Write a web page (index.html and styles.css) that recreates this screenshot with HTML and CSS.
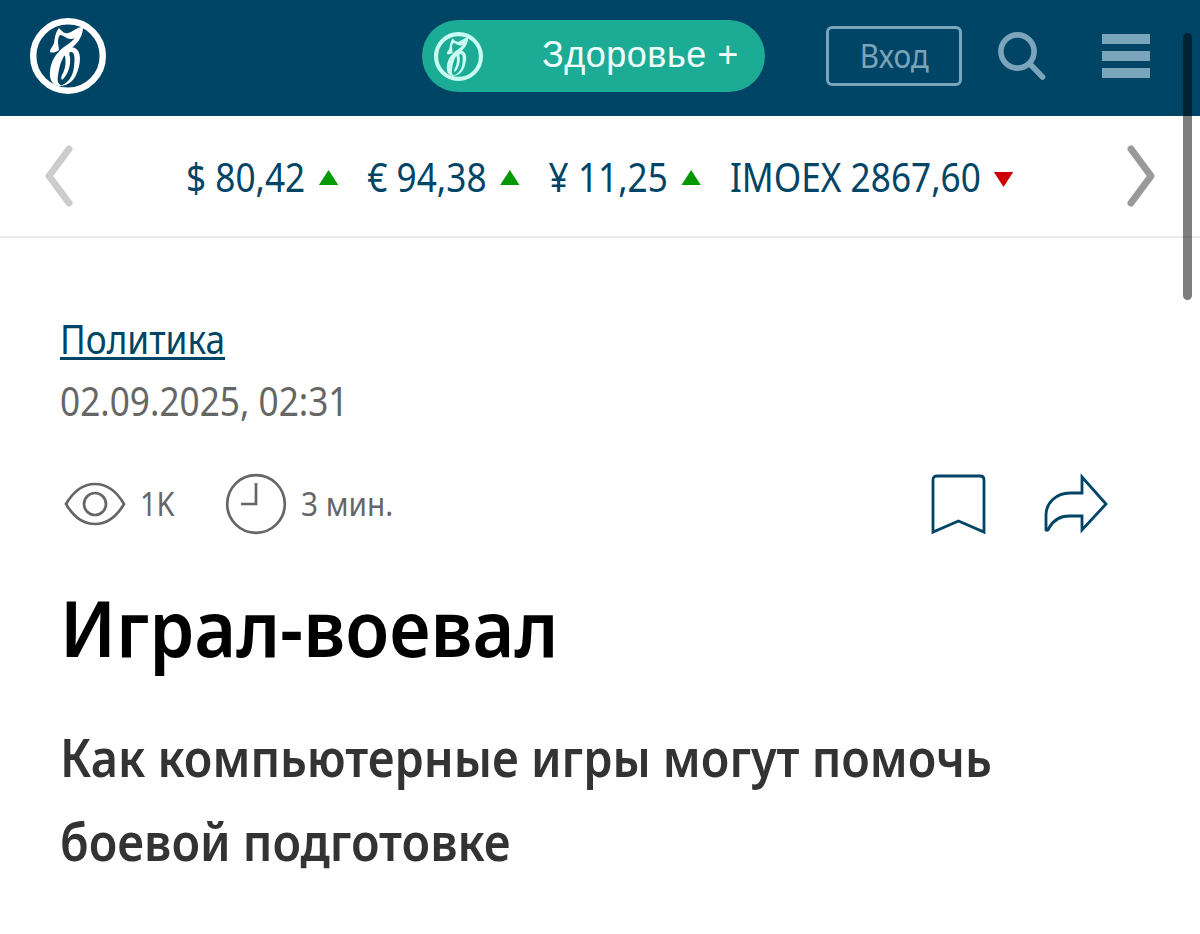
FILE: index.html
```html
<!DOCTYPE html>
<html lang="ru">
  <head>
    <meta charset="UTF-8" />
    <meta name="viewport" content="width=device-width, initial-scale=1.0" />
    <title>Играл-воевал</title>
    <link rel="stylesheet" href="styles.css">
  </head>
  <body>
    <svg class="defs" width="0" height="0">
      <symbol id="logo" viewBox="0 0 76 76">
        <circle cx="38" cy="38" r="34.8" fill="none" stroke="currentColor" stroke-width="6.4" />
        <!-- flag -->
        <path d="M29 10 C32 13 34 16 38 15 C43 14 46 9 53 9 C50 16 47 21 41 21 C36 21 34 17 30 17 C28 19 28 22 28 25 L29 32 C25 35 22 35 20 34 C20 30 23 29 24 25 C25 20 25 15 29 10 Z" fill="currentColor" />
        <!-- stem and left curve -->
        <path d="M53 9 C53 20 46 27 38 33 C31 40 29 50 28 58 C27 63 28 66 32 68 C23 69 19 62 20 53 C21 43 26 35 34 29 C42 24 47 19 49 11 Z" fill="currentColor" />
        <!-- right bowl -->
        <path d="M32 36 C35 30 41 28 45 30 C51 33 51 43 48 52 C45 62 39 68 29 68 C38 66 43 58 44 49 C45 41 45 34 41 34 C39 34 39 36 40 39 C41 47 38 57 32 62 C31 61 31 59 32 57 C36 50 36 43 35 38 C34 37 33 38 31 40 Z" fill="currentColor" />
      </symbol>
    </svg>
    <header class="header">
      <a class="logo"><svg width="76" height="76"><use href="#logo" /></svg></a>
      <a class="health">
        <svg width="49" height="49"><use href="#logo" /></svg>
        <span class="health-text">Здоровье +</span>
      </a>
      <a class="login"><span>Вход</span></a>
      <svg class="search" width="50" height="50" viewBox="0 0 50 50">
        <circle cx="20.5" cy="20.5" r="16.6" />
        <path d="M33 33 L45.5 46" />
      </svg>
      <div class="menu"><i></i><i></i><i></i></div>
    </header>

    <nav class="ticker">
      <svg class="arrow arrow-left" width="30" height="62" viewBox="0 0 30 62">
        <path d="M25 4 L5 31 L25 58" />
      </svg>
      <div class="rates">
        <div class="rate"><span>$ 80,42</span><b class="up"></b></div>
        <div class="rate"><span>€ 94,38</span><b class="up"></b></div>
        <div class="rate"><span>¥ 11,25</span><b class="up"></b></div>
        <div class="rate"><span>IMOEX 2867,60</span><b class="down"></b></div>
      </div>
      <svg class="arrow arrow-right" width="30" height="62" viewBox="0 0 30 62">
        <path d="M5 4 L25 31 L5 58" />
      </svg>
    </nav>

    <main class="article">
      <div><a class="rubric">Политика</a></div>
      <div><span class="date">02.09.2025, 02:31</span></div>
      <div class="meta">
        <svg class="eye" width="62" height="46" viewBox="0 0 62 46">
          <path d="M2 23 C9 11 19 3 31 3 C43 3 53 11 60 23 C53 35 43 43 31 43 C19 43 9 35 2 23 Z" />
          <circle cx="31" cy="23" r="11" />
        </svg>
        <span class="views">1K</span>
        <svg class="clock" width="62" height="62" viewBox="0 0 62 62">
          <circle cx="31" cy="31" r="28.8" />
          <path d="M31 10 V31 H16" />
        </svg>
        <span class="time">3 мин.</span>
        <svg class="bookmark" width="56" height="62" viewBox="0 0 56 62">
          <path d="M2 59 V7 Q2 3 6 3 H49 Q53 3 53 7 V59 L27.5 48 Z" />
        </svg>
        <svg class="share" width="66" height="62" viewBox="0 0 66 62">
          <path d="M38 4 V20 H26 C12 20 2 30 2 42 V57 Q4 58 5 55 C10 46 17 43 25 43 H38 V57 L62 31 Z" />
        </svg>
      </div>
      <h1 class="title">Играл-воевал</h1>
      <h2 class="subtitle">Как компьютерные игры могут помочь<br>боевой подготовке</h2>
    </main>
    <div class="scrollbar"></div>
  </body>
</html>
```
FILE: styles.css
```css
* {
  margin: 0;
  padding: 0;
  box-sizing: border-box;
}
body {
  position: relative;
  height: 934px;
  overflow: hidden;
  background-color: #fff;
  color: #666;
  font-family: "Noto Sans", sans-serif;
  font-size: 40px;
}
svg {
  display: block;
  flex: none;
}
.defs {
  display: none;
}
.header {
  display: flex;
  align-items: center;
  height: 116px;
  padding: 0 50px 4px 30px;
  background-color: #004466;
}
.logo {
  color: #fff;
}
.health {
  display: flex;
  align-items: center;
  width: 343px;
  height: 72px;
  margin-left: 316px;
  padding-left: 12px;
  border-radius: 36px;
  background-color: #1cac96;
  color: #c9fbf2;
}
.health-text {
  margin-left: 59px;
  padding-bottom: 2px;
  color: #f0fffc;
  font-family: "Liberation Sans", Arial, sans-serif;
  font-size: 36px;
  letter-spacing: 0.5px;
  white-space: nowrap;
}
.login {
  display: flex;
  align-items: center;
  justify-content: center;
  width: 136px;
  height: 60px;
  margin-left: 61px;
  border: 3px solid #7ba5bb;
  border-radius: 6px;
  color: #7ba5bb;
  font-size: 33px;
}
/* narrow text */
.login span,
.rates,
.rubric,
.date,
.views,
.time,
.title,
.subtitle {
  transform: scaleX(0.88);
  transform-origin: left;
}
.login span {
  padding-bottom: 2px;
  transform: scaleX(0.9);
  transform-origin: center;
}
.search {
  margin-left: 35px;
  fill: none;
  stroke: #7ba5bb;
  stroke-width: 5.6;
  stroke-linecap: round;
}
.menu {
  display: grid;
  gap: 7px;
  width: 48px;
  margin-left: auto;
}
.menu i {
  height: 10px;
  background-color: #7ba5bb;
}
.ticker {
  display: flex;
  align-items: center;
  height: 122px;
  padding: 0 44px;
  border-bottom: 2px solid #ebebeb;
  color: #004466;
}
.arrow {
  fill: none;
  stroke-width: 7;
  stroke-linecap: round;
  stroke-linejoin: round;
}
.arrow-left {
  stroke: #ccc;
}
.arrow-right {
  margin-left: auto;
  stroke: #999;
}
.rates {
  display: flex;
  gap: 33.5px;
  width: 950px;
  margin-left: 112px;
  margin-right: -150px;
}
.rate {
  display: flex;
  align-items: center;
  white-space: nowrap;
}
.up,
.down {
  margin-left: 15px;
  border: 11px solid transparent;
}
.up {
  margin-top: 3px;
  border-top: 0;
  border-bottom: 15px solid #090;
}
.down {
  margin-top: 6px;
  border-bottom: 0;
  border-top: 15px solid #c00;
}
.article {
  padding: 70px 60px 0;
}
.article div {
  line-height: 62px;
}
.rubric,
.date {
  display: inline-block;
}
.rubric {
  color: #004466;
  text-decoration: underline;
  text-decoration-thickness: 3px;
  text-underline-offset: 3px;
}
.meta {
  display: flex;
  align-items: center;
  height: 64px;
  margin-top: 40px;
  padding: 0 30px 0 4px;
  font-size: 33px;
}
.eye,
.clock {
  fill: none;
  stroke: #666;
  stroke-width: 2.7;
}
.views,
.time {
  margin-left: 14px;
}
.time {
  transform: scaleX(0.9);
}
.clock {
  margin-left: 46px;
}
.bookmark,
.share {
  fill: none;
  stroke: #004466;
  stroke-width: 2.8;
}
.bookmark {
  margin-left: auto;
}
.share {
  margin-left: 57px;
}
.title {
  margin-top: 38px;
  color: #000;
  font-size: 78px;
  font-weight: 600;
  line-height: 106px;
  transform: scaleX(0.924);
}
.subtitle {
  margin-top: 35px;
  color: #333;
  font-size: 52px;
  font-weight: 600;
  line-height: 84px;
  white-space: nowrap;
  transform: scaleX(0.9);
}
.scrollbar {
  position: absolute;
  top: 33px;
  right: 8px;
  width: 9px;
  height: 267px;
  border-radius: 5px;
  background-color: rgba(0, 0, 0, 0.5);
}
```
